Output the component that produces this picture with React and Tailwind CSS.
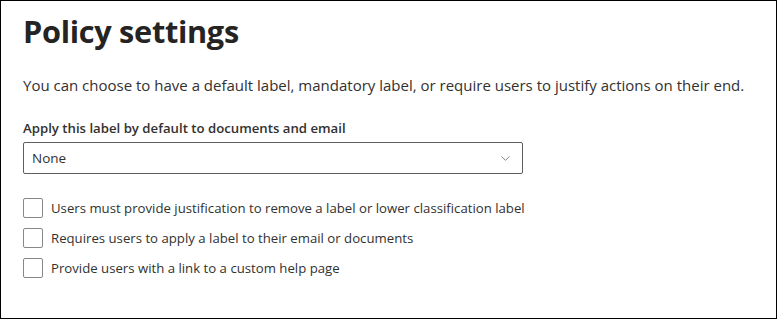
import { ChevronDown } from 'lucide-react'

const options = [
  'Users must provide justification to remove a label or lower classification label',
  'Requires users to apply a label to their email or documents',
  'Provide users with a link to a custom help page',
]

export default function App() {
  return (
    <div
      className="w-[777px] h-[319px] border border-black bg-white text-[#323130] overflow-hidden"
      style={{ fontFamily: '"Open Sans", "Noto Sans", sans-serif' }}
    >
      <div className="pl-[22px] pt-[10px]">
        {/* Title */}
        <h1 className="text-[30.7px] font-bold leading-[40px] tracking-[-0.3px] text-[#252423]">
          Policy settings
        </h1>

        <p className="mt-[24px] text-[15px] leading-[20px]">
          You can choose to have a default label, mandatory label, or require users to justify actions on their end.
        </p>

        {/* Default label */}
        <label className="block mt-[23px] text-[13.2px] font-semibold leading-[20px]">
          Apply this label by default to documents and email
        </label>
        <div className="mt-[4px] w-[500px] h-[32px] border border-[#605e5c] rounded-[2px] flex items-center justify-between pl-[8px] pr-[9px]">
          <span className="text-[13.5px]">None</span>
          <ChevronDown size={15} strokeWidth={1.2} className="text-[#605e5c]" />
        </div>

        {/* Checkboxes */}
        <div className="mt-[24px] flex flex-col gap-[10px]">
          {options.map((text) => (
            <label key={text} className="flex items-center gap-[8px] h-[20px]">
              <span className="w-[20px] h-[20px] border border-[#8a8886] rounded-[2px] bg-white shrink-0" />
              <span className="text-[13.2px] leading-[20px]">{text}</span>
            </label>
          ))}
        </div>
      </div>
    </div>
  )
}
